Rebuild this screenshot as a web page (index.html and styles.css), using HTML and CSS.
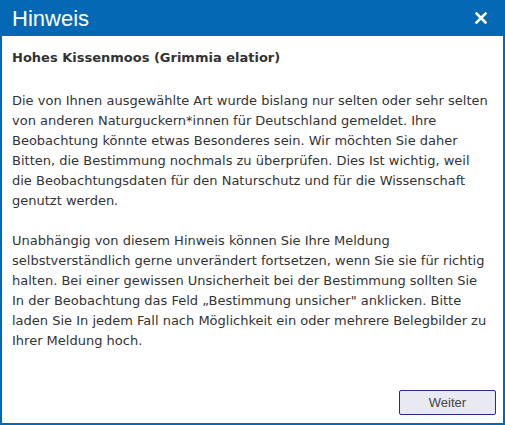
FILE: index.html
```html
<!DOCTYPE html>
<html lang="de">
<head>
    <meta charset="UTF-8">
    <meta name="viewport" content="width=device-width, initial-scale=1.0">
    <title>Hinweis</title>
    <link rel="stylesheet" href="styles.css">
</head>
<body>
    <div class="dialog">
        <div class="dialog-header">
            <span class="dialog-title">Hinweis</span>
            <button type="button" class="close-btn" aria-label="Schließen">
                <svg width="12" height="12" viewBox="0 0 12 12">
                    <path d="M1.5 1.5 L10.5 10.5 M10.5 1.5 L1.5 10.5" stroke="#fff" stroke-width="2.6" stroke-linecap="square"/>
                </svg>
            </button>
        </div>
        <div class="dialog-body">
            <p class="species">Hohes Kissenmoos (Grimmia elatior)</p>
            <p>Die von Ihnen ausgewählte Art wurde bislang nur selten oder sehr selten von anderen Naturguckern*innen für Deutschland gemeldet. Ihre Beobachtung könnte etwas Besonderes sein. Wir möchten Sie daher Bitten, die Bestimmung nochmals zu überprüfen. Dies Ist wichtig, weil die Beobachtungsdaten für den Naturschutz und für die Wissenschaft genutzt werden.</p>
            <p>Unabhängig von diesem Hinweis können Sie Ihre Meldung selbstverständlich gerne unverändert fortsetzen, wenn Sie sie für richtig halten. Bei einer gewissen Unsicherheit bei der Bestimmung sollten Sie In der Beobachtung das Feld „Bestimmung unsicher" anklicken. Bitte laden Sie In jedem Fall nach Möglichkeit ein oder mehrere Belegbilder zu Ihrer Meldung hoch.</p>
        </div>
        <div class="dialog-footer">
            <button type="button" class="next-btn">Weiter</button>
        </div>
    </div>
</body>
</html>
```

FILE: styles.css
```css
html, body {
    margin: 0;
    padding: 0;
    height: 100%;
}
body {
    background: #fff;
}
.dialog {
    box-sizing: border-box;
    height: 425px;
    width: 505px;
    display: flex;
    flex-direction: column;
    border: 2px solid #0568b5;
    border-top: none;
    background: #fff;
}
.dialog-header {
    background: #0568b5;
    height: 36px;
    margin: 0 -2px;
    display: flex;
    align-items: center;
    justify-content: space-between;
    padding: 0 18px 0 12px;
}
.dialog-title {
    color: #fff;
    font-family: "Liberation Sans", Arial, sans-serif;
    font-size: 22px;
    line-height: 36px;
    padding-top: 1px;
}
.close-btn {
    background: none;
    border: none;
    padding: 0;
    display: flex;
    cursor: pointer;
}
.dialog-body {
    flex: 1;
    padding: 12px 10px 0 10px;
    font-family: "DejaVu Sans", Verdana, sans-serif;
    font-size: 13px;
    line-height: 20px;
    color: #333;
}
.dialog-body p {
    margin: 0 0 20px 0;
}
.dialog-body .species {
    font-weight: bold;
    margin-bottom: 23px;
}
.dialog-footer {
    display: flex;
    justify-content: flex-end;
    padding: 0 7px 8px 0;
}
.next-btn {
    width: 97px;
    height: 25px;
    background: #e9e9f2;
    border: 1px solid #2a2a8a;
    border-radius: 2px;
    font-family: "Liberation Sans", Arial, sans-serif;
    font-size: 13px;
    color: #444;
    cursor: pointer;
}
```
